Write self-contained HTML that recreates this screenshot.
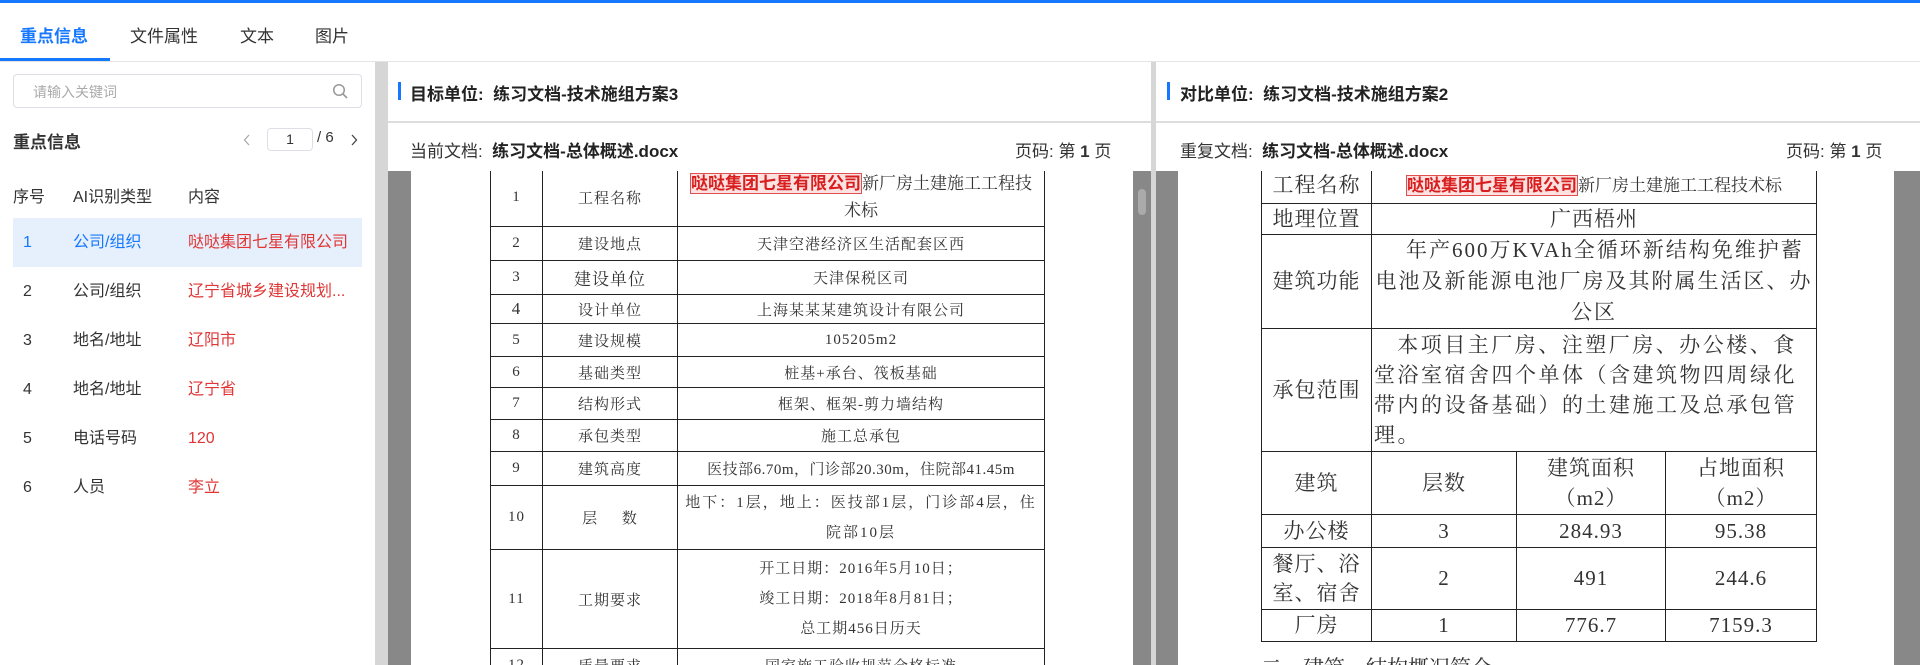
<!DOCTYPE html>
<html><head><meta charset="utf-8"><style>
*{margin:0;padding:0;box-sizing:border-box}
body{width:1920px;height:665px;overflow:hidden;background:#fff;font-family:"Liberation Sans","Noto Sans CJK SC",sans-serif;color:#333;position:relative}
.a{position:absolute}
.tab{position:absolute;top:22px;font-size:17px;color:#333}
.row{position:absolute;left:13px;width:349px;height:49px;font-size:16px;line-height:49px}
.row span{position:absolute}
.red{color:#e03636}
table{border-collapse:collapse;font-family:"Liberation Serif","Noto Serif CJK SC",serif;color:#333;table-layout:fixed}
td{border:1.3px solid #222;text-align:center;padding:0 4px}
.hl{background:#fde2e2;border:1px solid #e05050;color:#d81e1e;font-family:"Liberation Sans","Noto Sans CJK SC",sans-serif;font-weight:bold;letter-spacing:0}
</style></head><body>
<div class="a" style="left:0;top:0;width:1920px;height:3px;background:#1677ff"></div>
<div class="tab" style="left:20px;color:#1677ff;font-weight:bold">重点信息</div>
<div class="tab" style="left:130px">文件属性</div>
<div class="tab" style="left:240px">文本</div>
<div class="tab" style="left:315px">图片</div>
<div class="a" style="left:0;top:58px;width:110px;height:3px;background:#1677ff"></div>
<div class="a" style="left:0;top:61px;width:1920px;height:1px;background:#e4e4e4"></div>

<!-- left sidebar -->
<div class="a" style="left:13px;top:74px;width:349px;height:34px;border:1px solid #dcdfe6;border-radius:4px"></div>
<div class="a" style="left:33px;top:82px;font-size:14px;color:#aaa">请输入关键词</div>
<svg class="a" style="left:332px;top:83px" width="17" height="17" viewBox="0 0 17 17"><circle cx="7" cy="7" r="5.3" fill="none" stroke="#999" stroke-width="1.5"/><line x1="11" y1="11" x2="15" y2="15" stroke="#999" stroke-width="1.6"/></svg>
<div class="a" style="left:13px;top:128px;font-size:17px;font-weight:bold;color:#333">重点信息</div>
<svg class="a" style="left:242px;top:133px" width="10" height="14" viewBox="0 0 10 14"><path d="M7 2 L2.5 7 L7 12" fill="none" stroke="#aaa" stroke-width="1.3"/></svg>
<div class="a" style="left:267px;top:128px;width:46px;height:23px;border:1px solid #dcdfe6;border-radius:4px;font-size:14px;text-align:center;line-height:21px">1</div>
<div class="a" style="left:317px;top:129px;font-size:15px">/ 6</div>
<svg class="a" style="left:349px;top:133px" width="10" height="14" viewBox="0 0 10 14"><path d="M3 2 L7.5 7 L3 12" fill="none" stroke="#444" stroke-width="1.3"/></svg>
<div class="a" style="left:13px;top:183px;font-size:16px">序号</div>
<div class="a" style="left:73px;top:183px;font-size:16px">AI识别类型</div>
<div class="a" style="left:188px;top:183px;font-size:16px">内容</div>
<div class="a" style="left:13px;top:218px;width:349px;height:1px;background:#e4e7ed"></div>
<div class="row" style="top:218px;background:#e6f0fc;color:#1677ff"><span style="left:10px">1</span><span style="left:60px">公司/组织</span><span class="red" style="left:175px">哒哒集团七星有限公司</span></div>
<div class="row" style="top:267px"><span style="left:10px">2</span><span style="left:60px">公司/组织</span><span class="red" style="left:175px">辽宁省城乡建设规划...</span></div>
<div class="row" style="top:316px"><span style="left:10px">3</span><span style="left:60px">地名/地址</span><span class="red" style="left:175px">辽阳市</span></div>
<div class="row" style="top:365px"><span style="left:10px">4</span><span style="left:60px">地名/地址</span><span class="red" style="left:175px">辽宁省</span></div>
<div class="row" style="top:414px"><span style="left:10px">5</span><span style="left:60px">电话号码</span><span class="red" style="left:175px">120</span></div>
<div class="row" style="top:463px"><span style="left:10px">6</span><span style="left:60px">人员</span><span class="red" style="left:175px">李立</span></div>
<div class="a" style="left:375px;top:62px;width:13px;height:603px;background:#d6d6d6"></div>

<!-- left doc panel -->
<div class="a" style="left:388px;top:62px;width:763px;height:603px;background:#fff"></div>
<div class="a" style="left:398px;top:82px;width:3px;height:18px;background:#1677ff"></div>
<div class="a" style="left:410px;top:80px;font-size:17px;font-weight:bold;color:#222">目标单位:&nbsp;&nbsp;练习文档-技术施组方案3</div>
<div class="a" style="left:388px;top:121px;width:763px;height:2px;background:#ddd"></div>
<div class="a" style="left:410px;top:137px;font-size:17px;color:#333">当前文档:&nbsp;&nbsp;<b style="color:#222">练习文档-总体概述.docx</b></div>
<div class="a" style="left:1015px;top:137px;font-size:17px;color:#333">页码: 第 <b>1</b> 页</div>
<div class="a" style="left:388px;top:171px;width:763px;height:494px;background:#888;overflow:hidden">
  <div class="a" style="left:23px;top:0;width:722px;height:494px;background:#fff"></div>
  <div class="a" style="left:750px;top:18px;width:8px;height:26px;border-radius:4px;background:#aaa"></div>
  <table class="a" style="left:102px;top:-4px;width:555px;font-size:15px;letter-spacing:1px">
   <colgroup><col style="width:52px"><col style="width:135px"><col></colgroup>
   <tr style="height:59px"><td>1</td><td>工程名称</td><td style="line-height:27px;font-size:17px;letter-spacing:0"><span class="hl">哒哒集团七星有限公司</span>新厂房土建施工工程技术标</td></tr>
   <tr style="height:34px"><td>2</td><td>建设地点</td><td>天津空港经济区生活配套区西</td></tr>
   <tr style="height:34px"><td>3</td><td style="font-size:17px">建设单位</td><td>天津保税区司</td></tr>
   <tr style="height:29px"><td style="font-size:17px">4</td><td>设计单位</td><td>上海某某某建筑设计有限公司</td></tr>
   <tr style="height:33px"><td>5</td><td>建设规模</td><td>105205m2</td></tr>
   <tr style="height:31px"><td>6</td><td>基础类型</td><td>桩基+承台、筏板基础</td></tr>
   <tr style="height:32px"><td>7</td><td>结构形式</td><td>框架、框架-剪力墙结构</td></tr>
   <tr style="height:32px"><td>8</td><td>承包类型</td><td>施工总承包</td></tr>
   <tr style="height:34px"><td>9</td><td>建筑高度</td><td style="letter-spacing:0.5px">医技部6.70m，门诊部20.30m，住院部41.45m</td></tr>
   <tr style="height:64px"><td>10</td><td>层&nbsp;&nbsp;&nbsp;&nbsp;&nbsp;数</td><td style="line-height:30px;letter-spacing:2px">地下：1层，地上：医技部1层，门诊部4层，住院部10层</td></tr>
   <tr style="height:99px"><td>11</td><td>工期要求</td><td style="line-height:30px">开工日期：2016年5月10日；<br>竣工日期：2018年8月81日；<br>总工期456日历天</td></tr>
   <tr style="height:34px"><td>12</td><td>质量要求</td><td>国家施工验收规范合格标准</td></tr>
  </table>
</div>
<div class="a" style="left:1151px;top:62px;width:5px;height:603px;background:#d6d6d6"></div>

<!-- right doc panel -->
<div class="a" style="left:1167px;top:82px;width:3px;height:18px;background:#1677ff"></div>
<div class="a" style="left:1180px;top:80px;font-size:17px;font-weight:bold;color:#222">对比单位:&nbsp;&nbsp;练习文档-技术施组方案2</div>
<div class="a" style="left:1156px;top:121px;width:764px;height:2px;background:#ddd"></div>
<div class="a" style="left:1180px;top:137px;font-size:17px;color:#333">重复文档:&nbsp;&nbsp;<b style="color:#222">练习文档-总体概述.docx</b></div>
<div class="a" style="left:1786px;top:137px;font-size:17px;color:#333">页码: 第 <b>1</b> 页</div>
<div class="a" style="left:1156px;top:171px;width:764px;height:494px;background:#888;overflow:hidden">
  <div class="a" style="left:22px;top:0;width:716px;height:494px;background:#fff"></div>
  <table class="a" style="left:105px;top:-4px;width:556px;font-size:21px;line-height:29px;letter-spacing:1px">
   <colgroup><col style="width:110px"><col style="width:145px"><col style="width:149px"><col></colgroup>
   <tr style="height:36px"><td>工程名称</td><td colspan="3" style="font-size:17px;white-space:nowrap;padding:0;letter-spacing:0"><span class="hl">哒哒集团七星有限公司</span>新厂房土建施工工程技术标</td></tr>
   <tr style="height:31px"><td>地理位置</td><td colspan="3">广西梧州</td></tr>
   <tr style="height:94px"><td>建筑功能</td><td colspan="3" style="padding:0 2px;line-height:31px;letter-spacing:2px">&nbsp;&nbsp;&nbsp;年产600万KVAh全循环新结构免维护蓄电池及新能源电池厂房及其附属生活区、办公区</td></tr>
   <tr style="height:123px"><td>承包范围</td><td colspan="3" style="text-align:left;padding:0 2px;line-height:30px;letter-spacing:2.5px">&nbsp;&nbsp;&nbsp;本项目主厂房、注塑厂房、办公楼、食堂浴室宿舍四个单体（含建筑物四周绿化带内的设备基础）的土建施工及总承包管理。</td></tr>
   <tr style="height:63px"><td>建筑</td><td>层数</td><td style="line-height:30px">建筑面积（m2）</td><td style="line-height:30px">占地面积（m2）</td></tr>
   <tr style="height:33px"><td>办公楼</td><td>3</td><td>284.93</td><td>95.38</td></tr>
   <tr style="height:62px"><td style="line-height:29px">餐厅、浴室、宿舍</td><td>2</td><td>491</td><td>244.6</td></tr>
   <tr style="height:32px"><td>厂房</td><td>1</td><td>776.7</td><td>7159.3</td></tr>
  </table>
  <div class="a" style="left:105px;top:481px;font-family:'Liberation Serif','Noto Serif CJK SC',serif;font-size:21px">二、建筑、结构概况简介</div>
</div>
</body></html>
